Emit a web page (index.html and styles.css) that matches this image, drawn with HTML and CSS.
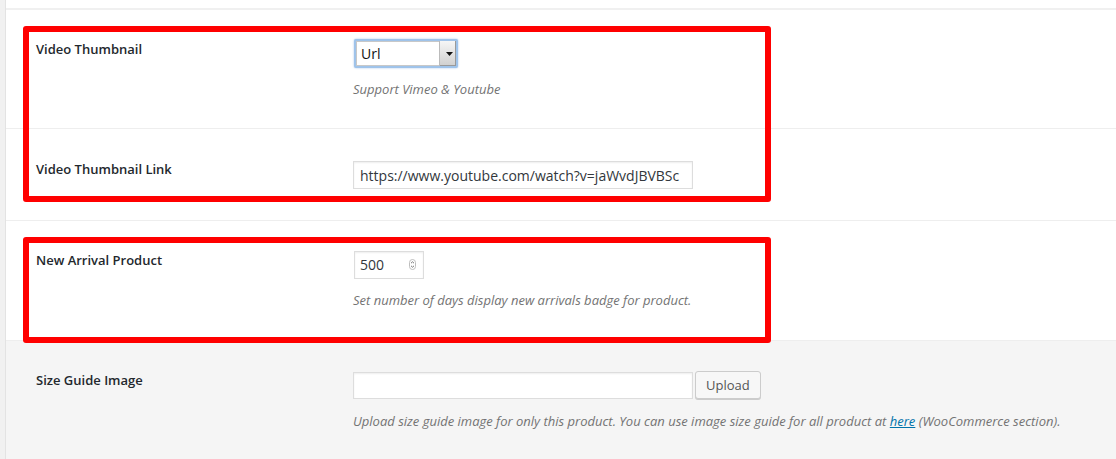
FILE: index.html
```html
<!DOCTYPE html>
<html>
<head>
<meta charset="utf-8">
<link rel="stylesheet" href="styles.css">
</head>
<body>
<div class="page">
  <div class="panel">
    <div class="top"></div>

    <div class="group">
      <div class="row row-1">
        <div class="label">Video Thumbnail</div>
        <div class="field">
          <div class="select">
            <span class="select-value">Url</span>
            <span class="select-arrow"><svg width="7" height="4" viewBox="0 0 7 4"><path d="M0 0h7L3.5 4z" fill="#111"/></svg></span>
          </div>
          <p class="desc desc-1">Support Vimeo &amp; Youtube</p>
        </div>
      </div>
      <div class="row row-2">
        <div class="label">Video Thumbnail Link</div>
        <div class="field">
          <input class="text text-link" type="text" value="https://www.youtube.com/watch?v=jaWvdJBVBSc">
        </div>
      </div>
      <div class="mark mark-1"></div>
    </div>

    <div class="group">
      <div class="row row-3">
        <div class="label">New Arrival Product</div>
        <div class="field">
          <div class="number">
            <span class="number-value">500</span>
            <svg class="spin" width="7" height="11" viewBox="0 0 7 11"><rect x="0.5" y="0.5" width="6" height="10" rx="3" fill="#fff" stroke="#bdbdbd"/><path d="M2 4.2L3.5 2.8 5 4.2M2 6.8L3.5 8.2 5 6.8" fill="none" stroke="#666" stroke-width="0.9"/></svg>
          </div>
          <p class="desc desc-3">Set number of days display new arrivals badge for product.</p>
        </div>
      </div>
      <div class="mark mark-2"></div>
    </div>

    <div class="row row-4">
      <div class="label">Size Guide Image</div>
      <div class="field">
        <div class="upload-line">
          <input class="text text-upload" type="text" value="">
          <button class="button" type="button">Upload</button>
        </div>
        <p class="desc desc-4">Upload size guide image for only this product. You can use image size guide for all product at <a href="#">here</a> (WooCommerce section).</p>
      </div>
    </div>
  </div>
</div>
</body>
</html>
```

FILE: styles.css
```css
* { box-sizing: border-box; }

html, body {
  margin: 0;
  padding: 0;
  background: #f1f1f1;
  font-family: "Open Sans", "Liberation Sans", sans-serif;
  color: #23282d;
}

.page {
  padding-left: 5px;
  min-height: 459px;
}

.panel {
  background: #fff;
  border-left: 1px solid #e3e3e3;
  min-height: 459px;
  overflow: hidden;
}

.top {
  height: 10px;
  border-bottom: 2px solid #f0f0f0;
}

.group {
  position: relative;
}

.row {
  display: flex;
  padding-left: 30px;
  border-bottom: 1px solid #eee;
}

.label {
  width: 317px;
  flex: none;
  font-size: 13px;
  font-weight: 600;
  line-height: 20px;
  color: #23282d;
}

.field {
  flex: 1;
  display: flex;
  flex-direction: column;
  align-items: flex-start;
}

.row-1 { padding-top: 29px; padding-bottom: 29px; }
.row-2 { padding-top: 30px; padding-bottom: 31px; }
.row-3 { padding-top: 29px; padding-bottom: 30px; }
.row-4 {
  padding-top: 29px;
  padding-bottom: 40px;
  background: #f5f5f5;
  border-bottom: 0;
  border-top: 1px solid #ececec;
  margin-top: -1px;
}

.desc {
  margin: 0;
  font-size: 13px;
  line-height: 20px;
  font-style: italic;
  color: #737373;
}

.desc-1 { margin-top: 11px; }
.desc-3 { margin-top: 11px; }
.desc-4 { margin-top: 12px; }

.desc a {
  color: #0073aa;
  text-decoration: underline;
}

/* faux select */
.select {
  margin-left: 1px;
  width: 104px;
  height: 29px;
  display: flex;
  border: 2px solid #9fc3ea;
  border-radius: 2px;
  box-shadow: 0 0 2px rgba(90, 150, 220, 0.6);
  background: #fff;
}

.select-value {
  flex: 1;
  border: 1px solid #c8c8c8;
  border-right: 0;
  font-family: "Open Sans", "Liberation Sans", sans-serif;
  font-size: 14px;
  line-height: 23px;
  padding-left: 4px;
  color: #111;
}

.select-arrow {
  width: 17px;
  flex: none;
  display: flex;
  align-items: center;
  justify-content: center;
  padding-left: 3px;
  background: linear-gradient(to bottom, #f6f6f6, #cfcfcf);
  border-left: 1px solid #bbb;
  box-shadow: inset -1px -1px 0 #999;
}

/* inputs */
.text {
  height: 27px;
  border: 1px solid #ddd;
  box-shadow: inset 0 1px 2px rgba(0, 0, 0, 0.07);
  background: #fff;
  color: #32373c;
  font-family: "Open Sans", "Liberation Sans", sans-serif;
  font-size: 14px;
  padding: 0 6px;
  margin: 0;
  outline: none;
}

.text-link {
  width: 340px;
  margin-top: 2px;
  height: 28px;
}

.number {
  margin-top: 1px;
  margin-left: 1px;
  width: 70px;
  height: 28px;
  border: 1px solid #ddd;
  box-shadow: inset 0 1px 2px rgba(0, 0, 0, 0.07);
  background: #fff;
  display: flex;
  align-items: center;
  padding: 0 7px 0 5px;
}

.number-value {
  flex: 1;
  font-size: 14px;
  color: #32373c;
  line-height: 20px;
}

.spin {
  display: block;
  margin-top: -1px;
}

.upload-line {
  display: flex;
  align-items: flex-start;
  margin-top: 1px;
}

.text-upload {
  width: 340px;
  margin-top: 1px;
}

.button {
  margin-left: 2px;
  height: 28px;
  padding: 0 10px 1px;
  border: 1px solid #ccc;
  border-radius: 3px;
  background: #f7f7f7;
  box-shadow: 0 1px 0 #ccc;
  color: #555;
  font-family: "Open Sans", "Liberation Sans", sans-serif;
  font-size: 13px;
  line-height: 26px;
}

/* red highlight annotations over the rows */
.mark {
  position: absolute;
  border: 6px solid #f00;
  border-radius: 3px;
  left: 17px;
  width: 748px;
  pointer-events: none;
}

.mark-1 { top: 16px; height: 176px; }
.mark-2 { top: 16px; height: 106px; }
```
